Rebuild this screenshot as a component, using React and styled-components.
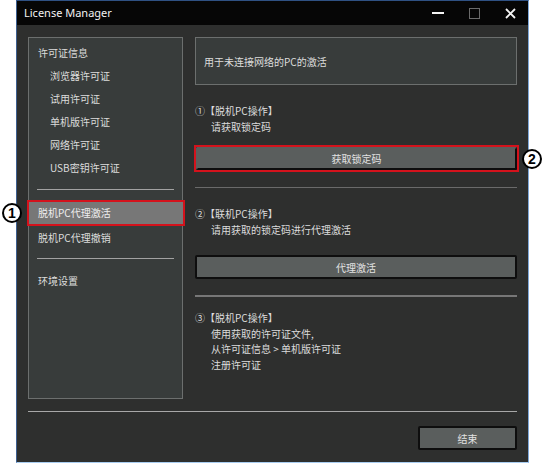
import React from "react";
import styled, { createGlobalStyle } from "styled-components";

const Global = createGlobalStyle`
  html, body { margin: 0; padding: 0; background: #ffffff; }
  body { font-family: "Noto Sans CJK SC", "Noto Sans", sans-serif; }
  * { box-sizing: border-box; }
`;

const Page = styled.div`
  width: 548px;
  height: 463px;
  padding-left: 16px;
  position: relative;
`;

const Window = styled.div`
  width: 513px;
  height: 463px;
  border-style: solid;
  border-width: 1px;
  border-color: #2f5183 #7fa9db #a9cdf1 #3d5f90;
  background: #2e2f2e;
  display: flex;
  flex-direction: column;
`;

const TitleBar = styled.div`
  height: 24px;
  flex: none;
  background: #060606;
  display: flex;
  align-items: center;
  padding-left: 7px;
`;

const Title = styled.div`
  flex: 1;
  color: #f2f2f2;
  font-family: "Noto Sans", "Liberation Sans", sans-serif;
  font-size: 11px;
  line-height: 24px;
`;

const Controls = styled.div`
  display: flex;
  height: 24px;
`;

const CtrlButton = styled.div`
  width: 36px;
  height: 24px;
  display: flex;
  align-items: center;
  justify-content: center;
`;

const Body = styled.div`
  flex: 1;
  padding: 12px 11px 12px 11px;
  display: flex;
  flex-direction: column;
`;

const TopRow = styled.div`
  height: 362px;
  display: flex;
  gap: 12px;
`;

const Sidebar = styled.div`
  width: 155px;
  flex: none;
  background: #383c3b;
  border: 1px solid #6c6f6e;
  padding-top: 3px;
  display: flex;
  flex-direction: column;
`;

const NavItem = styled.div`
  height: 23px;
  line-height: 23px;
  font-size: 10px;
  color: #dcdcdc;
  padding-left: ${(p) => (p.$sub ? 21 : 9)}px;
  white-space: nowrap;
  margin-top: ${(p) => p.$mt || 0}px;
`;

const NavSelected = styled.div`
  position: relative;
  height: 26px;
  margin: 10px -3px 0 -2px;
  border: 2px solid #d4121c;
  background: #777777;
  color: #eeeeee;
  font-size: 10px;
  line-height: 22px;
  padding-left: 9px;
  white-space: nowrap;
`;

const NavRule = styled.div`
  height: 1px;
  background: #a2a2a2;
  margin: ${(p) => p.$mt}px 8px 0 8px;
`;

const Marker = styled.span`
  position: absolute;
  width: 20px;
  height: 20px;
  border-radius: 50%;
  border: 2px solid #000;
  background: #fff;
  color: #000;
  font-family: "Liberation Sans", Arial, sans-serif;
  font-weight: bold;
  font-size: 14px;
  line-height: 16px;
  text-align: center;
  top: 50%;
  transform: translateY(-50%);
  left: ${(p) => p.$left}px;
`;

const Main = styled.div`
  flex: 1;
  display: flex;
  flex-direction: column;
`;

const InfoBox = styled.div`
  height: 48px;
  background: #383c3b;
  border: 1px solid #6c6f6e;
  display: flex;
  align-items: center;
  padding-left: 8px;
  font-size: 10px;
  color: #dcdcdc;
`;

const Step = styled.div`
  margin-top: ${(p) => p.$mt}px;
  font-size: 10px;
  line-height: ${(p) => p.$lh || 16}px;
  color: #dcdcdc;
  white-space: nowrap;
`;

const StepLine = styled.div`
  padding-left: ${(p) => (p.$indent ? 16 : 0)}px;
`;

const Highlight = styled.div`
  position: relative;
  margin: ${(p) => p.$mt}px -2px 0 -1px;
  border: 2px solid #d4121c;
  height: 27px;
  display: flex;
`;

const Button = styled.div`
  flex: ${(p) => (p.$fill ? 1 : "none")};
  width: ${(p) => (p.$w ? `${p.$w}px` : "auto")};
  height: ${(p) => p.$h || 24}px;
  margin-top: ${(p) => p.$mt || 0}px;
  background: #5a5e5d;
  border: 2px solid #0e0e0e;
  border-top-color: ${(p) => (p.$flat ? "#5a5e5d" : "#0e0e0e")};
  border-left-color: ${(p) => (p.$flat ? "#5a5e5d" : "#0e0e0e")};
  border-radius: 2px;
  color: #e2e2e2;
  font-size: 10px;
  display: flex;
  align-items: center;
  justify-content: center;
`;

const Rule = styled.div`
  height: ${(p) => p.$h || 1}px;
  background: ${(p) => p.$c || "#6e6e6e"};
  margin-top: ${(p) => p.$mt}px;
`;

const Footer = styled.div`
  display: flex;
  justify-content: flex-end;
  margin-top: 14px;
`;

export default function App() {
  return (
    <>
      <Global />
      <Page>
        <Window>
          <TitleBar>
            <Title>License Manager</Title>
            <Controls>
              <CtrlButton>
                <svg width="13" height="4" viewBox="0 0 13 4">
                  <rect x="0" y="1" width="12" height="2" fill="#f4f4f4" />
                </svg>
              </CtrlButton>
              <CtrlButton>
                <svg width="11" height="11" viewBox="0 0 11 11">
                  <rect x="0.5" y="0.5" width="10" height="10" fill="none" stroke="#6a6a6a" />
                </svg>
              </CtrlButton>
              <CtrlButton>
                <svg width="11" height="11" viewBox="0 0 11 11">
                  <path d="M1 1 L10 10 M10 1 L1 10" stroke="#f4f4f4" strokeWidth="1.8" />
                </svg>
              </CtrlButton>
            </Controls>
          </TitleBar>
          <Body>
            <TopRow>
              <Sidebar>
                <NavItem>许可证信息</NavItem>
                <NavItem $sub>浏览器许可证</NavItem>
                <NavItem $sub>试用许可证</NavItem>
                <NavItem $sub>单机版许可证</NavItem>
                <NavItem $sub>网络许可证</NavItem>
                <NavItem $sub>USB密钥许可证</NavItem>
                <NavRule $mt={10} />
                <NavSelected>
                  脱机PC代理激活
                  <Marker $left={-27}>1</Marker>
                </NavSelected>
                <NavItem>脱机PC代理撤销</NavItem>
                <NavRule $mt={9} />
                <NavItem $mt={10}>环境设置</NavItem>
              </Sidebar>
              <Main>
                <InfoBox>用于未连接网络的PC的激活</InfoBox>
                <Step $mt={18}>
                  <StepLine>①【脱机PC操作】</StepLine>
                  <StepLine $indent>请获取锁定码</StepLine>
                </Step>
                <Highlight $mt={10}>
                  <Button $fill $flat $h={23}>获取锁定码</Button>
                  <Marker $left={326}>2</Marker>
                </Highlight>
                <Rule $mt={15} $c="#6a6a6a" />
                <Step $mt={18}>
                  <StepLine>②【联机PC操作】</StepLine>
                  <StepLine $indent>请用获取的锁定码进行代理激活</StepLine>
                </Step>
                <Button $mt={17}>代理激活</Button>
                <Rule $mt={16} $h={2} $c="#777777" />
                <Step $mt={13} $lh={15.5}>
                  <StepLine>③【脱机PC操作】</StepLine>
                  <StepLine $indent>使用获取的许可证文件,</StepLine>
                  <StepLine $indent>从许可证信息 &gt; 单机版许可证</StepLine>
                  <StepLine $indent>注册许可证</StepLine>
                </Step>
              </Main>
            </TopRow>
            <Rule $mt={12} $c="#a8a8a8" />
            <Footer>
              <Button $w={99}>结束</Button>
            </Footer>
          </Body>
        </Window>
      </Page>
    </>
  );
}
